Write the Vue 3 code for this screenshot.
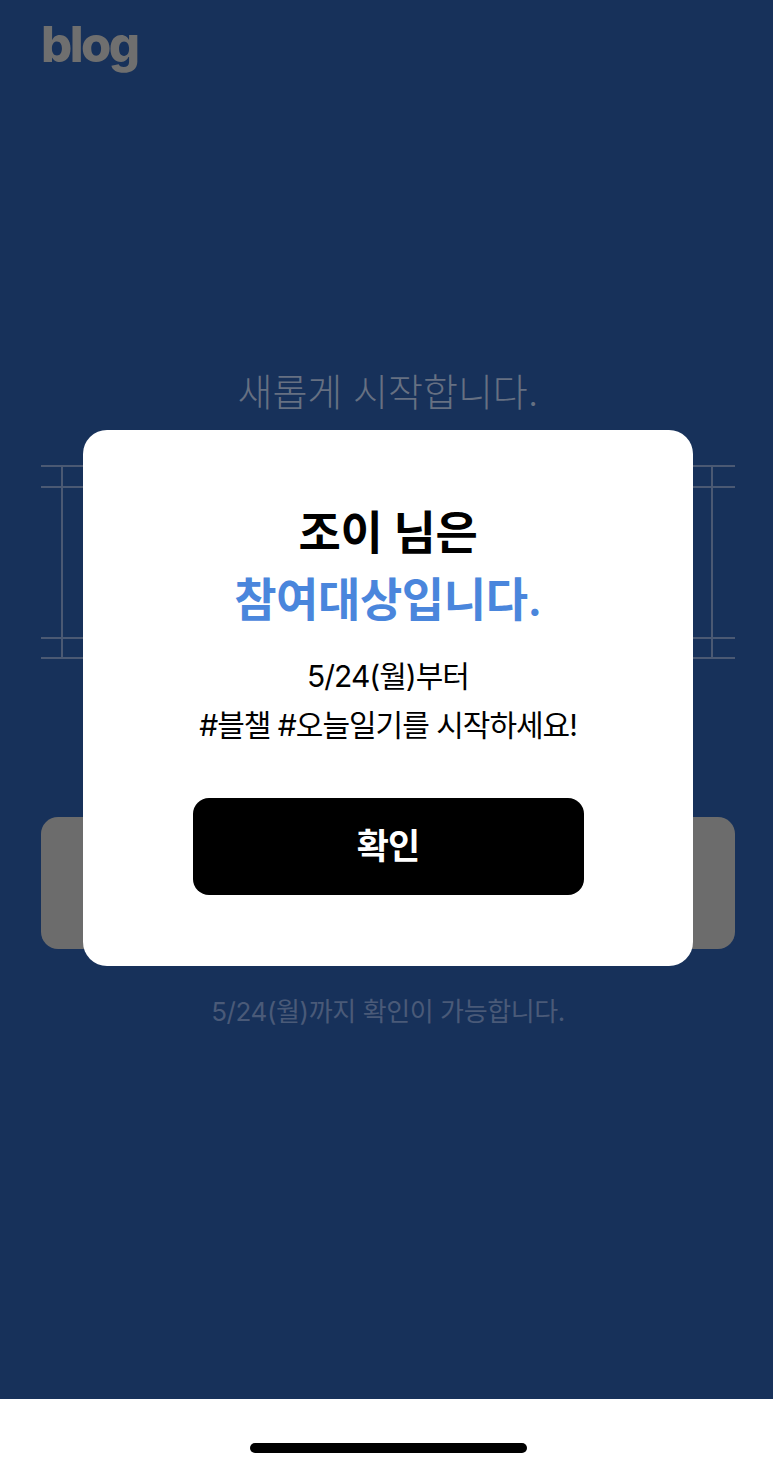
<script setup>
const railRows = [466, 487, 638, 658]
const railX = [21, 671]
</script>

<template>
  <div class="page">
    <main class="screen">
      <header class="head"><span class="logo">blog</span></header>
      <h1 class="lead">새롭게 시작합니다.</h1>
      <svg class="frame" width="694" height="194" viewBox="0 0 694 194" aria-hidden="true">
        <line v-for="y in railRows" :key="y" x1="0" x2="694" :y1="y - 465" :y2="y - 465" />
        <line v-for="x in railX" :key="x" :x1="x" :x2="x" y1="1" y2="193" />
      </svg>
      <div class="ghost-btn"></div>
      <p class="note">5/24(월)까지 확인이 가능합니다.</p>
    </main>
    <footer class="home"><span class="indicator"></span></footer>

    <div class="overlay">
      <section class="modal">
        <h2 class="title">조이 님은<br /><em>참여대상입니다.</em></h2>
        <p class="body">5/24(월)부터<br />#블챌 #오늘일기를 시작하세요!</p>
        <button class="confirm" type="button">확인</button>
      </section>
    </div>
  </div>
</template>

<style>
html, body { margin: 0; background: #fff; }
</style>

<style scoped>
.page {
  position: relative;
  width: 773px;
  height: 1470px;
  display: flex;
  flex-direction: column;
  overflow: hidden;
  font-family: "Inter", "Noto Sans CJK KR", sans-serif;
}
.screen {
  height: 1399px;
  background: #17315a;
  padding: 0 38px 0 41px;
  box-sizing: border-box;
  display: flex;
  flex-direction: column;
  align-items: center;
}
.head { align-self: flex-start; height: 72px; display: flex; align-items: center; }
.logo {
  font-family: "Inter", sans-serif;
  font-weight: 800;
  font-size: 49px;
  line-height: 1;
  letter-spacing: -2.6px;
  color: #6f6f6f;
  margin-top: 16px;
}
.lead {
  margin: 293px 0 0;
  height: 54px;
  font-size: 38px;
  line-height: 54px;
  font-weight: 300;
  letter-spacing: 0;
  color: #667082;
  white-space: nowrap;
}
.frame { display: block; margin-top: 46px; flex: none; }
.frame line { stroke: #4b5973; stroke-width: 2; }
.ghost-btn {
  width: 694px;
  height: 132px;
  margin-top: 158px;
  border-radius: 17px;
  background: #6c6c6c;
  flex: none;
}
.note {
  margin: 44px 0 0;
  font-size: 26px;
  line-height: 38px;
  letter-spacing: -0.4px;
  color: #4a5a78;
  white-space: nowrap;
}
.home {
  height: 71px;
  background: #fff;
  display: flex;
  justify-content: center;
  padding: 44px 0 0 4px;
  box-sizing: border-box;
}
.indicator { width: 277px; height: 10px; border-radius: 5px; background: #000; }
.overlay {
  position: absolute;
  top: 430px;
  left: 83px;
}
.modal {
  width: 610px;
  height: 536px;
  box-sizing: border-box;
  padding-top: 69px;
  background: #fff;
  border-radius: 24px;
  display: flex;
  flex-direction: column;
  align-items: center;
}
.title {
  margin: 0;
  font-size: 46px;
  line-height: 67px;
  font-weight: 600;
  letter-spacing: -0.4px;
  color: #000;
  text-align: center;
  white-space: nowrap;
}
.title em { font-style: normal; color: #4a86dc; }
.body {
  margin: 19px 0 0;
  font-size: 30px;
  line-height: 49px;
  font-weight: 400;
  letter-spacing: -1px;
  color: #000;
  text-align: center;
  white-space: nowrap;
}
.confirm {
  width: 391px;
  height: 97px;
  margin-top: 48px;
  border: 0;
  border-radius: 16px;
  background: #000;
  color: #fff;
  font-family: inherit;
  font-size: 35px;
  font-weight: 700;
  letter-spacing: -1px;
  padding: 0 0 6px;
}
</style>
